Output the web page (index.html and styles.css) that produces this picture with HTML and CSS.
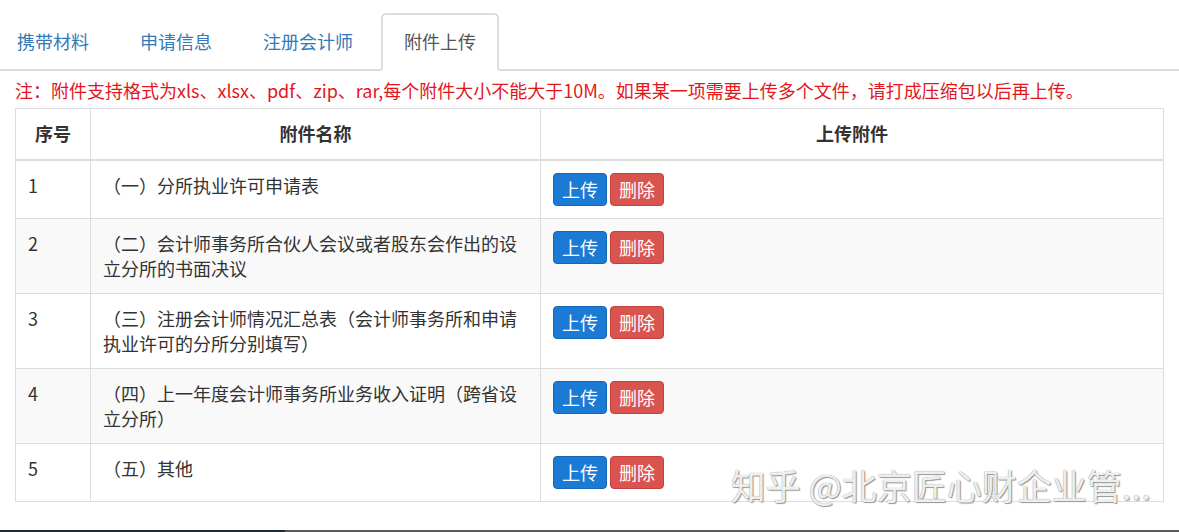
FILE: index.html
```html
<!DOCTYPE html>
<html lang="zh-CN">
  <head>
    <meta charset="UTF-8" />
    <meta name="viewport" content="width=device-width, initial-scale=1.0" />
    <title>附件上传</title>
    <link rel="stylesheet" href="styles.css">
  </head>
  <body>
    <div class="page">
      <ul class="nav-tabs">
        <li><a href="#">携带材料</a></li>
        <li><a href="#">申请信息</a></li>
        <li><a href="#">注册会计师</a></li>
        <li class="active"><a href="#">附件上传</a></li>
      </ul>

      <div class="content">
        <p class="note">注：附件支持格式为xls、xlsx、pdf、zip、rar,每个附件大小不能大于10M。如果某一项需要上传多个文件，请打成压缩包以后再上传。</p>

        <table class="fj-table">
          <colgroup>
            <col class="c-no" />
            <col class="c-name" />
            <col />
          </colgroup>
          <thead>
            <tr>
              <th>序号</th>
              <th>附件名称</th>
              <th>上传附件</th>
            </tr>
          </thead>
          <tbody>
            <tr>
              <td>1</td>
              <td>（一）分所执业许可申请表</td>
              <td><div class="btns"><button class="btn btn-up">上传</button><button class="btn btn-del">删除</button></div></td>
            </tr>
            <tr>
              <td>2</td>
              <td>（二）会计师事务所合伙人会议或者股东会作出的设立分所的书面决议</td>
              <td><div class="btns"><button class="btn btn-up">上传</button><button class="btn btn-del">删除</button></div></td>
            </tr>
            <tr>
              <td>3</td>
              <td>（三）注册会计师情况汇总表（会计师事务所和申请执业许可的分所分别填写）</td>
              <td><div class="btns"><button class="btn btn-up">上传</button><button class="btn btn-del">删除</button></div></td>
            </tr>
            <tr>
              <td>4</td>
              <td>（四）上一年度会计师事务所业务收入证明（跨省设立分所）</td>
              <td><div class="btns"><button class="btn btn-up">上传</button><button class="btn btn-del">删除</button></div></td>
            </tr>
            <tr>
              <td>5</td>
              <td>（五）其他</td>
              <td><div class="btns"><button class="btn btn-up">上传</button><button class="btn btn-del">删除</button></div></td>
            </tr>
          </tbody>
        </table>

        <div class="watermark">知乎 @北京匠心财企业管...</div>
      </div>
    </div>
    <div class="bottom-bar"><span class="dark"></span></div>
  </body>
</html>
```

FILE: styles.css
```css
* {
  box-sizing: border-box;
}
html,
body {
  margin: 0;
  padding: 0;
  height: 100%;
}
body {
  font-family: "Noto Sans CJK SC", "Noto Sans", sans-serif;
  font-size: 18px;
  line-height: 25px;
  color: #333;
  background: #fff;
  display: flex;
  flex-direction: column;
  overflow: hidden;
}
.page {
  flex: 1;
}

/* tabs */
.nav-tabs {
  list-style: none;
  margin: 0;
  padding: 13px 0 0 0;
  display: flex;
  border-bottom: 2px solid #ddd;
}
.nav-tabs li {
  margin-right: 5px;
  margin-bottom: -2px;
}
.nav-tabs a {
  display: block;
  padding: 14px 21px 15px;
  border: 2px solid transparent;
  border-radius: 5px 5px 0 0;
  color: #337ab7;
  text-decoration: none;
}
.nav-tabs li:first-child a {
  padding-left: 15px;
}
.nav-tabs .active a {
  color: #555;
  background: #fff;
  border-color: #ddd;
  border-bottom-color: #fff;
}

/* content */
.content {
  position: relative;
  padding: 0 15px;
}
.note {
  margin: 7px 0 5px;
  color: #e3161b;
  white-space: nowrap;
}

.fj-table {
  width: 100%;
  border-collapse: collapse;
  table-layout: fixed;
}
.c-no {
  width: 75px;
}
.c-name {
  width: 450px;
}
.fj-table th,
.fj-table td {
  border: 1px solid #ddd;
  padding: 12px;
  vertical-align: top;
  text-align: left;
}
.fj-table th {
  text-align: center;
  font-weight: bold;
  padding-bottom: 13px;
  border-bottom: 2px solid #ddd;
}
.fj-table tbody tr:nth-child(even) {
  background: #f9f9f9;
}

.btns {
  display: flex;
  gap: 3px;
}
.btn {
  font-family: inherit;
  font-size: 18px;
  line-height: 25px;
  padding: 3px 8px;
  border: 1px solid;
  border-radius: 4px;
  color: #fff;
  cursor: pointer;
}
.btn-up {
  background: #1a7ad4;
  border-color: #1567b5;
}
.btn-del {
  background: #d9534f;
  border-color: #c7403c;
}

.watermark {
  position: absolute;
  right: 28px;
  bottom: -4px;
  font-size: 35px;
  line-height: 42px;
  color: rgba(255, 255, 255, 0.9);
  text-shadow: 0 0 1px #777, 1px 1px 1px #999;
  pointer-events: none;
  white-space: nowrap;
}

.bottom-bar {
  height: 2px;
  background: #5a5a5a;
}
.bottom-bar .dark {
  display: block;
  width: 285px;
  height: 2px;
  background: #1d2b36;
}
```
